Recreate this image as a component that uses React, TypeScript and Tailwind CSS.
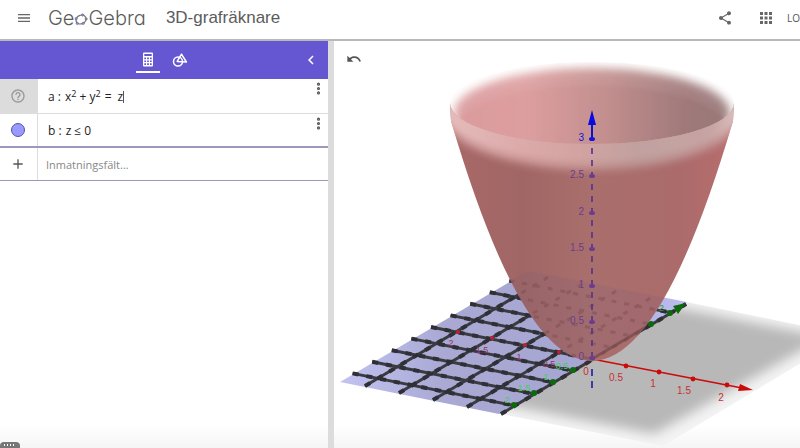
import { MoreVertical } from 'lucide-react'
import { MdMenu, MdShare, MdApps, MdAdd, MdUndo, MdHelpOutline, MdChevronLeft } from 'react-icons/md'

const FRONT = 'M450 103 A142 41 0 0 0 734 103 L733 121 Q592 601 451 121 Z'

const steps = [-4, -3, -2, -1, 0, 1, 2, 3, 4]

// grid lines of the xy plane, one unit is half a tick
const rows = steps.map((k) => ({
    x1: 592 + k * 19.6 - 161,
    y1: 359 - k * 11.6 - 32,
    x2: 592 + k * 19.6,
    y2: 359 - k * 11.6,
}))
const cols = [0, 1, 2, 3, 4].map((k) => ({
    x1: 501 - k * 34,
    y1: 414 - k * 7,
    x2: 686 - k * 34,
    y2: 304 - k * 7,
}))

const zTicks = [
    { y: 139, label: '3' },
    { y: 176, label: '2.5' },
    { y: 213, label: '2' },
    { y: 249, label: '1.5' },
    { y: 286, label: '1' },
    { y: 322, label: '0.5' },
    { y: 358, label: '0' },
]

const xTicks = [
    { x: 626, y: 366, label: '0.5', lx: 616, ly: 381 },
    { x: 659, y: 372, label: '1', lx: 653, ly: 387 },
    { x: 693, y: 379, label: '1.5', lx: 684, ly: 394 },
    { x: 727, y: 385, label: '2', lx: 721, ly: 401 },
]

const xNegative = [
    { x: 458, y: 332, label: '2', lx: 451, ly: 346 },
    { x: 492, y: 338, label: '1.5', lx: 482, ly: 353 },
    { x: 525, y: 345, label: '1', lx: 519, ly: 360 },
    { x: 559, y: 352, label: '0.5', lx: 549, ly: 367 },
]

const yNegative = [
    { x: 573, y: 370, label: '0.5', lx: 562, ly: 369 },
    { x: 553, y: 382, label: '1', lx: 546, ly: 380 },
    { x: 534, y: 393, label: '1.5', lx: 524, ly: 391 },
    { x: 514, y: 405, label: '2', lx: 507, ly: 403 },
]

function GridLines({ stroke, dash, width }: { stroke: string; dash?: string; width: number }) {
    return (
        <g stroke={stroke} strokeWidth={width} strokeDasharray={dash}>
            {rows.map((l) => <line key={l.x1} {...l} />)}
            {cols.map((l) => <line key={l.x1} {...l} />)}
        </g>
    )
}

function Graphics3D() {
    return (
        <svg
            viewBox="334 41 466 407"
            preserveAspectRatio="xMinYMin meet"
            className="block w-full font-['Liberation_Sans',sans-serif]"
            role="img"
            aria-label="3D"
        >
            <defs>
                <clipPath id="front"><path d={FRONT} /></clipPath>
                <clipPath id="rim"><ellipse cx="592" cy="103" rx="142" ry="41" /></clipPath>
                <clipPath id="plane"><path d="M500 414 L663 446 L848 335 L687 302 Z" /></clipPath>
                <filter id="soft6" x="-20%" y="-20%" width="140%" height="140%"><feGaussianBlur stdDeviation="6" /></filter>
                <filter id="soft5" x="-20%" y="-40%" width="140%" height="180%"><feGaussianBlur stdDeviation="5" /></filter>
                <filter id="soft2" x="-20%" y="-20%" width="140%" height="140%"><feGaussianBlur stdDeviation="2" /></filter>
                <linearGradient id="outside" x1="0" x2="1" y1="0" y2="0">
                    <stop offset="0" stopColor="#a96868" />
                    <stop offset="0.25" stopColor="#a06665" />
                    <stop offset="0.5" stopColor="#a96f6d" />
                    <stop offset="0.8" stopColor="#ab6b6b" />
                    <stop offset="1" stopColor="#b86d6d" />
                </linearGradient>
                <linearGradient id="inside" x1="0" x2="1" y1="0" y2="0">
                    <stop offset="0" stopColor="#d9989a" />
                    <stop offset="0.25" stopColor="#dd9c9d" />
                    <stop offset="0.55" stopColor="#c08c8b" />
                    <stop offset="0.85" stopColor="#9d7576" />
                    <stop offset="1" stopColor="#957475" />
                </linearGradient>
                <linearGradient id="band" x1="0" x2="1" y1="0" y2="0">
                    <stop offset="0" stopColor="#ebc4c4" />
                    <stop offset="0.25" stopColor="#e2b0b0" />
                    <stop offset="0.45" stopColor="#d6a8a6" />
                    <stop offset="0.65" stopColor="#c3a5a3" />
                    <stop offset="0.9" stopColor="#c9a9a8" />
                    <stop offset="1" stopColor="#e3caca" />
                </linearGradient>
                <linearGradient id="quad" x1="0" x2="1" y1="0" y2="0">
                    <stop offset="0" stopColor="#c3c3f2" />
                    <stop offset="0.3" stopColor="#a9a9d4" />
                    <stop offset="0.7" stopColor="#a6a6d2" />
                    <stop offset="1" stopColor="#bdbdf0" />
                </linearGradient>
                <linearGradient id="floor" x1="0" x2="0" y1="0" y2="1">
                    <stop offset="0" stopColor="#fff" />
                    <stop offset="1" stopColor="#f5f5f5" />
                </linearGradient>
            </defs>

            <rect x="334" y="424" width="466" height="24" fill="url(#floor)" />

            {/* plane */}
            <g clipPath="url(#plane)">
                <path d="M500 414 L663 446 L848 335 L687 302 Z" fill="#f3f3f3" />
                <path d="M470 398 L654 434 L825 337 L660 304 Z" fill="#b8b8b8" filter="url(#soft6)" />
            </g>
            <path d="M340 382 L499 414 L687 302 L528 271 Z" fill="url(#quad)" />
            <GridLines stroke="#3a3a41" width={3} />
            <GridLines stroke="#2f2f36" width={4} dash="6 8" />

            {/* y axis */}
            <g fill="#0c6a0c" fontSize="9">
                <circle cx="651" cy="324" r="3" />
                <circle cx="670" cy="313" r="3" />
                <path d="M686 303 L678 314 L673 306 Z" />
                <text x="659" y="311" fill="#2a9a2a">2</text>
                {yNegative.map((t) => (
                    <g key={t.label}>
                        <circle cx={t.x} cy={t.y} r="3" />
                        <text x={t.lx} y={t.ly} textAnchor="middle" fill="#3fd050">{t.label}</text>
                    </g>
                ))}
            </g>

            {/* negative x axis */}
            <g fontSize="9">
                {xNegative.map((t) => (
                    <g key={t.label}>
                        <circle cx={t.x} cy={t.y} r="2" fill="#c01f32" />
                        <text x={t.lx} y={t.ly} textAnchor="middle" fill="#923468">{t.label}</text>
                    </g>
                ))}
            </g>

            {/* positive x axis */}
            <g fill="#cc0a0a" fontSize="10">
                <path d="M592 359 L742 388" stroke="#cc0a0a" strokeWidth="1.4" />
                <path d="M753 390 L740 384 L738 391 Z" />
            </g>

            {/* paraboloid, inner side first */}
            <g clipPath="url(#rim)">
                <ellipse cx="592" cy="113" rx="138" ry="45" fill="url(#inside)" filter="url(#soft5)" opacity="0.9" />
                <ellipse cx="592" cy="130" rx="136" ry="45" fill="url(#inside)" filter="url(#soft2)" opacity="0.7" />
            </g>
            <path d={FRONT} fill="url(#outside)" />
            <g clipPath="url(#front)">
                <ellipse cx="592" cy="112" rx="150" ry="57" fill="url(#band)" filter="url(#soft5)" opacity="0.85" />
                <ellipse cx="592" cy="104" rx="150" ry="56" fill="url(#band)" filter="url(#soft2)" opacity="0.5" />
            </g>

            {/* parts seen through the surface */}
            <g clipPath="url(#front)">
                <path d="M340 382 L499 414 L687 302 L528 271 Z" fill="#6f5a80" opacity="0.14" />
                <g opacity="0.4">
                    <GridLines stroke="#7a474b" width={3} dash="5 8" />
                </g>
                <line x1="592" y1="359" x2="670" y2="313" stroke="#6b4145" strokeWidth="3" opacity="0.6" />
            </g>

            {/* x ticks and labels */}
            <g fill="#c8302f" fontSize="10">
                {xTicks.map((t) => (
                    <g key={t.label}>
                        <circle cx={t.x} cy={t.y} r="2.4" fill="#cc0a0a" />
                        <text x={t.lx} y={t.ly} textAnchor="middle">{t.label}</text>
                    </g>
                ))}
                <text x="586" y="375" textAnchor="middle">0</text>
            </g>

            {/* z axis */}
            <line x1="592" y1="148" x2="592" y2="358" stroke="#55308a" strokeWidth="1.6" strokeDasharray="6 6" />
            <line x1="592" y1="369" x2="592" y2="388" stroke="#3a3aa8" strokeWidth="2" strokeDasharray="7 5" />
            <line x1="592" y1="122" x2="592" y2="139" stroke="#1111c8" strokeWidth="2" />
            <path d="M592 110 L596 125 L588 125 Z" fill="#0a0ae0" />
            {zTicks.map((t) => (
                <g key={t.label} fill={t.y < 150 ? '#1414d8' : '#6c3c8e'}>
                    <ellipse cx="592" cy={t.y} rx="3" ry="2" />
                    <text x="584" y={t.y + 2} fontSize="10" textAnchor="end">{t.label}</text>
                </g>
            ))}
        </svg>
    )
}

function CalculatorIcon() {
    return (
        <svg width="12" height="15" viewBox="0 0 12 15" fill="#fff">
            <path fillRule="evenodd" d="M2 0.5H10Q11 0.5 11 1.5V13.5Q11 14.5 10 14.5H2Q1 14.5 1 13.5V1.5Q1 0.5 2 0.5ZM2.3 2V4H9.7V2ZM2.3 5.5V7.2H4V5.5ZM5.1 5.5V7.2H6.9V5.5ZM8 5.5V7.2H9.7V5.5ZM2.3 8.4V10.1H4V8.4ZM5.1 8.4V10.1H6.9V8.4ZM8 8.4V10.1H9.7V8.4ZM2.3 11.3V13H4V11.3ZM5.1 11.3V13H6.9V11.3ZM8 11.3V13H9.7V11.3Z" />
        </svg>
    )
}

function ShapesIcon() {
    return (
        <svg width="16" height="16" viewBox="0 0 16 16" fill="none" stroke="#fff" strokeWidth="1.5">
            <circle cx="6" cy="9.5" r="4.5" />
            <path d="M9.5 2.2 L14.4 10 L5.2 9.4 Z" strokeLinejoin="round" />
        </svg>
    )
}

function Logo() {
    return (
        <div className="flex items-center text-[20px] leading-6 font-light text-[#5c5c5c] font-['Inter',sans-serif] [font-feature-settings:'cv11']" aria-label="GeoGebra">
            <span>Ge</span>
            <svg width="14" height="15" viewBox="0 0 13 14" className="mt-1" fill="none" stroke="#777">
                <ellipse cx="6.5" cy="7" rx="4.8" ry="4" transform="rotate(-25 6.5 7)" strokeWidth="1.2" />
                <g fill="#8f8fe0" strokeWidth="0.5" stroke="#666">
                    <circle cx="2" cy="6.2" r="1.1" />
                    <circle cx="8" cy="2.8" r="1.1" />
                    <circle cx="11.3" cy="6.5" r="1.1" />
                    <circle cx="8.6" cy="10.6" r="1.1" />
                    <circle cx="3" cy="10.6" r="1.1" />
                </g>
            </svg>
            <span>Gebra</span>
        </div>
    )
}

function MoreButton() {
    return (
        <button type="button" aria-label="Mer" className="mr-0.5 self-start pt-0.5 text-[#555]">
            <MoreVertical size={15} strokeWidth={3} />
        </button>
    )
}

export default function App() {
    return (
        <div className="flex min-h-screen flex-col overflow-hidden bg-white font-['Liberation_Sans',sans-serif]">
            <header className="flex h-[41px] items-center border-b-2 border-[#b9b9b9] pb-1 pl-4">
                <button type="button" aria-label="Meny" className="mr-4 text-[#666]">
                    <MdMenu size={16} />
                </button>
                <Logo />
                <h1 className="ml-5 text-[17px] leading-6 text-[#5c5c5c]">3D-grafräknare</h1>
                <button type="button" aria-label="Dela" className="ml-auto text-[#666]">
                    <MdShare size={16} />
                </button>
                <button type="button" aria-label="Appar" className="ml-6 text-[#666]">
                    <MdApps size={18} />
                </button>
                <button type="button" className="ml-3 text-[10px] leading-4 text-[#555] font-['Open_Sans',sans-serif]">LO</button>
            </header>

            <div className="grid flex-1 grid-cols-[41fr_59fr]">
                <aside className="flex flex-col">
                    <nav className="flex h-[38px] items-center bg-[#6557d2]">
                        <div className="ml-auto flex w-1/2 items-center">
                            <div className="-ml-7 flex items-center gap-2">
                                <button type="button" aria-label="Algebra" className="mt-1 flex w-[24px] flex-col items-center gap-1 border-b-2 border-white pb-1">
                                    <CalculatorIcon />
                                </button>
                                <button type="button" aria-label="Verktyg" className="flex w-6 justify-center">
                                    <ShapesIcon />
                                </button>
                            </div>
                            <button type="button" aria-label="Stäng" className="ml-auto mr-2 text-white">
                                <MdChevronLeft size={18} />
                            </button>
                        </div>
                    </nav>

                    <div className="text-[12px] font-medium text-[#222] font-['Open_Sans',sans-serif]">
                        <div className="flex h-[35px] border-b border-[#ddd]">
                            <div className="flex w-[38px] items-center justify-center bg-[#dcdcdc] pr-0.5 text-[#999]">
                                <MdHelpOutline size={16} />
                            </div>
                            <div className="flex flex-1 items-center gap-1 pt-0.5 pl-[10px]">
                                <span>a :</span>
                                <span>x<sup className="text-[9px]">2</sup> + y<sup className="text-[9px]">2</sup></span>
                                <span>=</span>
                                <span className="border-r border-[#555] pl-0.5 leading-3">z</span>
                            </div>
                            <MoreButton />
                        </div>
                        <div className="flex h-[34px] border-b-2 border-[#9a98bd]">
                            <div className="flex w-[38px] items-center justify-center border-r border-[#ddd] pr-0.5">
                                <button type="button" aria-label="Visa b" className="size-[14px] rounded-full border border-[#5553a8] bg-[#9999ff]" />
                            </div>
                            <div className="flex flex-1 items-center gap-1 pt-0.5 pl-[10px]">
                                <span>b :</span>
                                <span>z ≤ 0</span>
                            </div>
                            <MoreButton />
                        </div>
                        <div className="flex h-[33px] border-b border-[#9a98bd]">
                            <div className="flex w-[38px] items-center justify-center border-r border-[#ddd] pr-0.5 text-[#555]">
                                <MdAdd size={16} />
                            </div>
                            <input
                                type="text"
                                aria-label="Inmatningsfält"
                                placeholder="Inmatningsfält…"
                                className="min-w-0 flex-1 pt-0.5 pl-2 text-[11px] font-normal outline-none placeholder:text-[#888]"
                            />
                        </div>
                    </div>

                    <div className="mt-auto flex h-6 items-end bg-linear-to-b from-white to-[#f5f5f5]">
                        <button type="button" aria-label="Tangentbord" className="flex h-[6px] w-5 items-start gap-0.5 rounded-t-sm bg-[#777] px-1 pt-0.5">
                            <span className="h-0.5 w-px bg-white" />
                            <span className="h-0.5 w-px bg-white" />
                            <span className="h-0.5 w-px bg-white" />
                            <span className="h-0.5 w-px bg-white" />
                        </button>
                    </div>
                </aside>

                <main className="relative border-l-6 border-[#dcdcdc]">
                    <button type="button" aria-label="Ångra" className="absolute top-2.5 left-3 text-[#555]">
                        <MdUndo size={16} />
                    </button>
                    <Graphics3D />
                </main>
            </div>
        </div>
    )
}
